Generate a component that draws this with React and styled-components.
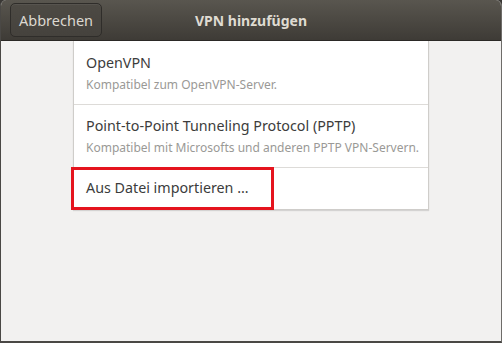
import React from 'react';
import styled, { createGlobalStyle } from 'styled-components';

const Global = createGlobalStyle`
  html, body { margin: 0; padding: 0; background: #3a3835; }
  body { font-family: "Noto Sans", "Open Sans", sans-serif; }
`;

const Window = styled.div`
  width: 500px;
  height: 341px;
  border-left: 1px solid #4a4845;
  border-right: 1px solid #6e6c69;
  border-bottom: 2px solid #4a4845;
  background: #f2f1f0;
  border-radius: 6px 6px 0 0;
  overflow: hidden;
  display: flex;
  flex-direction: column;
`;

const HeaderBar = styled.div`
  height: 41px;
  flex-shrink: 0;
  box-sizing: border-box;
  border-bottom: 1px solid #2b2926;
  background: linear-gradient(#59564f, #3e3b36);
  display: grid;
  grid-template-columns: 1fr auto 1fr;
  align-items: center;
  padding: 0 9px;
`;

const Button = styled.button`
  justify-self: start;
  height: 34px;
  padding: 0 8px;
  border: 1px solid #2f2d2a;
  border-radius: 5px;
  background: linear-gradient(#4d4a44, #45423d);
  box-shadow: inset 0 1px 0 rgba(255, 255, 255, 0.06);
  color: #dcd8d0;
  font-family: inherit;
  font-size: 14.5px;
  margin-top: 0;
`;

const Title = styled.div`
  color: #dfdbd2;
  font-weight: bold;
  font-size: 14px;
`;

const Content = styled.div`
  flex: 1;
  display: flex;
  justify-content: center;
`;

const List = styled.div`
  width: 354px;
  height: 168px;
  background: #fff;
  border: 1px solid #cfcdca;
  border-top: none;
  box-shadow: 0 1px 1px rgba(0, 0, 0, 0.12);
  display: flex;
  flex-direction: column;
`;

const Row = styled.div`
  position: relative;
  height: ${p => p.h}px;
  box-sizing: border-box;
  padding: ${p => p.pad};
  border-top: ${p => (p.first ? 'none' : '1px solid #dddbd8')};
`;

const Name = styled.div`
  color: #3c3c3c;
  font-size: 14.3px;
  line-height: 18px;
  white-space: nowrap;
`;

const Desc = styled.div`
  color: #9a9996;
  font-size: 12px;
  line-height: 16px;
  margin-top: 5px;
  white-space: nowrap;
`;

const Marker = styled.div`
  position: absolute;
  left: -3px;
  top: -1px;
  width: 203px;
  height: 43px;
  box-sizing: border-box;
  border: 3px solid #e5141e;
`;

export default function App() {
  return (
    <>
      <Global />
      <Window>
        <HeaderBar>
          <Button>Abbrechen</Button>
          <Title>VPN hinzufügen</Title>
          <span />
        </HeaderBar>
        <Content>
          <List>
            <Row first h={63} pad="12.5px 12px 0">
              <Name>OpenVPN</Name>
              <Desc>Kompatibel zum OpenVPN-Server.</Desc>
            </Row>
            <Row h={63} pad="12px 12px 0">
              <Name>Point-to-Point Tunneling Protocol (PPTP)</Name>
              <Desc>Kompatibel mit Microsofts und anderen PPTP VPN-Servern.</Desc>
            </Row>
            <Row h={42} pad="10.5px 12px 0">
              <Name>Aus Datei importieren …</Name>
              <Marker />
            </Row>
          </List>
        </Content>
      </Window>
    </>
  );
}
